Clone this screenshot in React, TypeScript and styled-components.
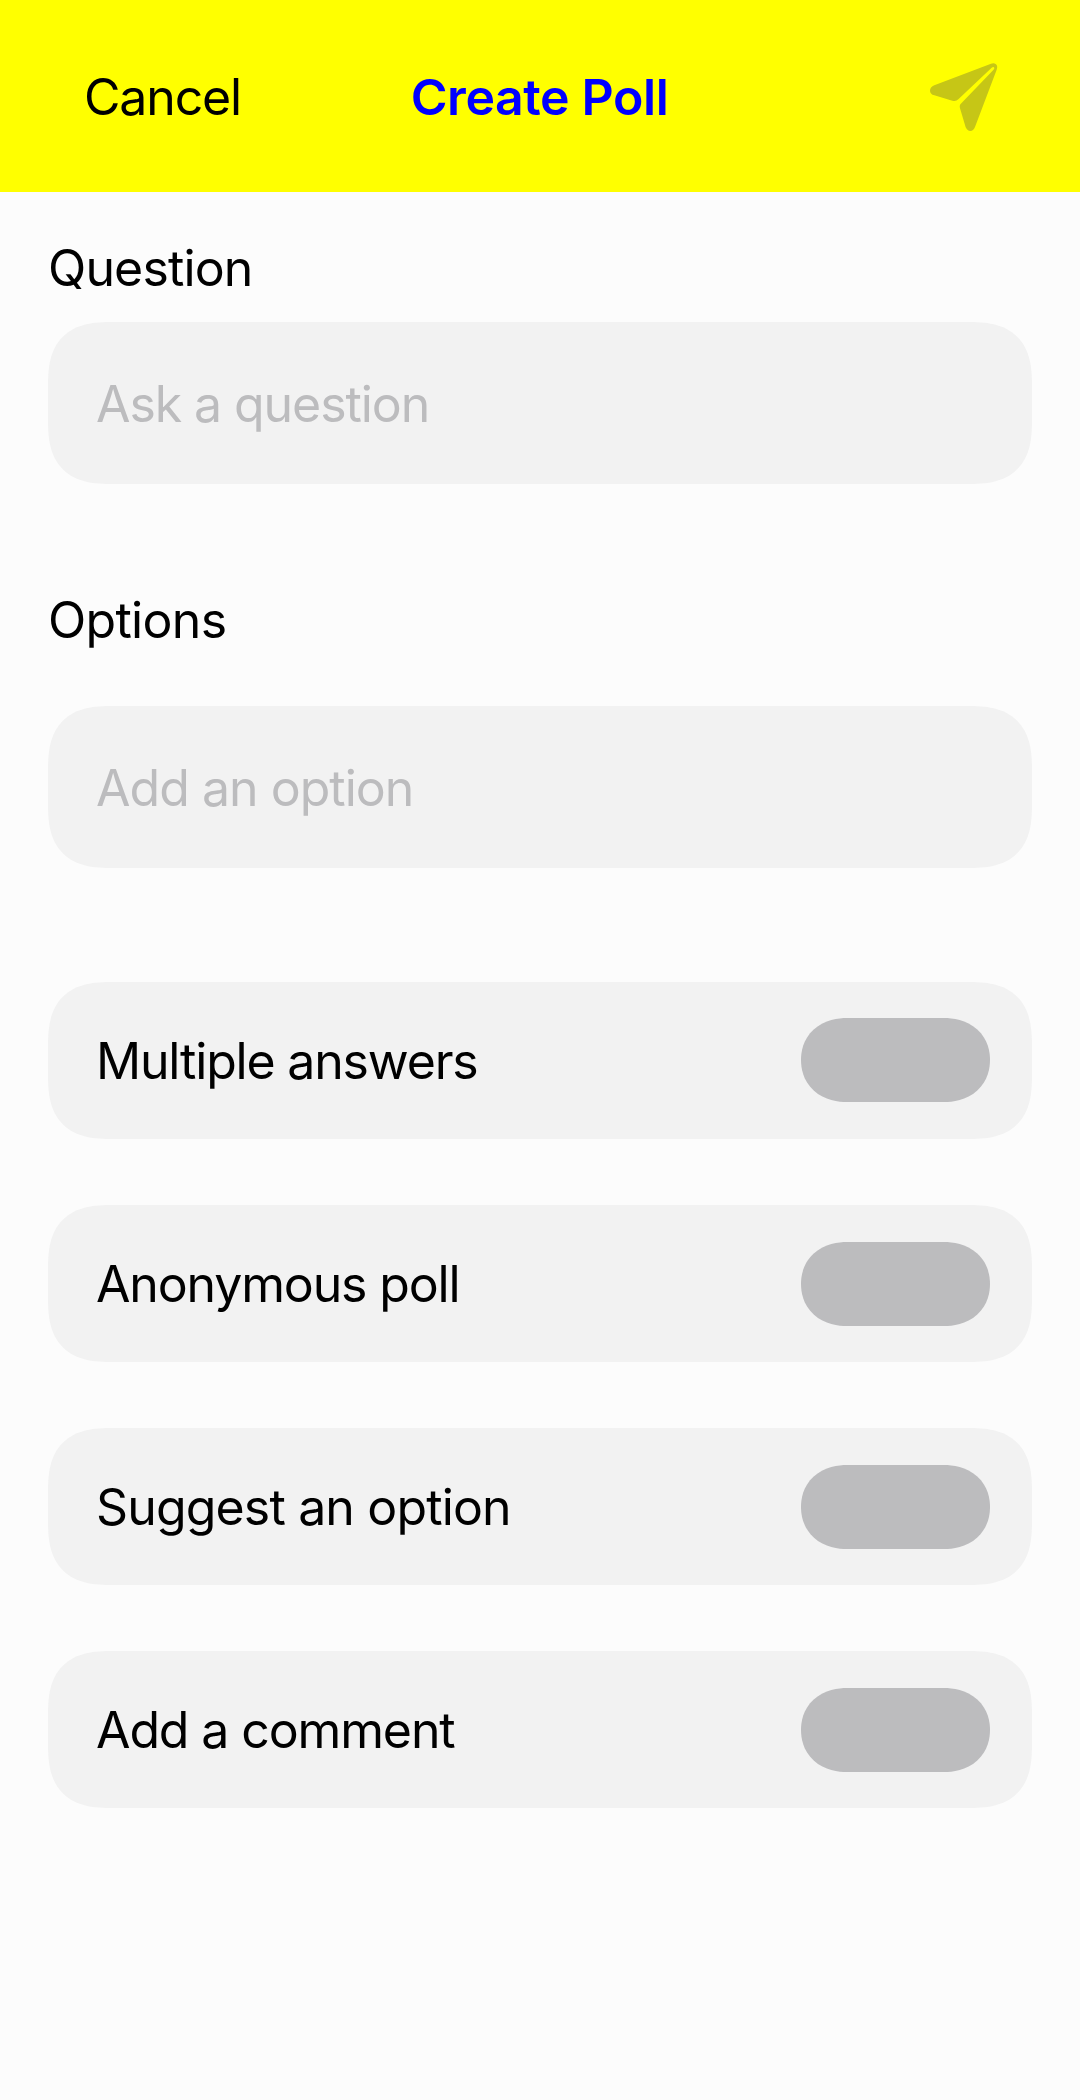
import React, { useState } from "react";
import styled, { createGlobalStyle, css } from "styled-components";

const GlobalStyle = createGlobalStyle`
  body {
    margin: 0;
    background: #fcfcfc;
    color: #000;
    font-family: Inter, "Liberation Sans", sans-serif;
  }
`;

const textBase = css`
  font-size: 50px;
  line-height: 60px;
  font-weight: 400;
  white-space: nowrap;
`;

const smoothCorners = css`
  border-radius: 49px;
  @supports (corner-shape: squircle) {
    border-radius: 64px;
    corner-shape: superellipse(1.4);
  }
`;

const Screen = styled.div`
  box-sizing: border-box;
  min-height: 2100px;
  background: #fcfcfc;
`;

const Header = styled.header`
  box-sizing: border-box;
  display: grid;
  grid-template-columns: 1fr auto 1fr;
  align-items: center;
  height: 192px;
  padding: 0 80px 0 84px;
  background: #ff0;
`;

const PlainButton = styled.button`
  padding: 0;
  border: 0;
  background: none;
  color: inherit;
  font-family: inherit;
`;

const CancelButton = styled(PlainButton)`
  ${textBase}
  justify-self: start;
  padding-top: 2px;
  letter-spacing: -1.15px;
`;

const Title = styled.h1`
  ${textBase}
  margin: 0;
  padding: 1px 5px 0 0;
  color: #00f;
  font-weight: 600;
  letter-spacing: -0.41px;
`;

const SendButton = styled(PlainButton)`
  justify-self: end;
  display: flex;
  margin-right: -30px;
  color: #c6c616;
`;

const Content = styled.main`
  display: flex;
  flex-direction: column;
  padding: 46px 48px 0;
`;

const Section = styled.section<{ $gap: number }>`
  display: flex;
  flex-direction: column;
  gap: ${(p) => p.$gap}px;
`;

const SectionTitle = styled.h2<{ $tracking: number }>`
  ${textBase}
  margin: 0;
  letter-spacing: ${(p) => p.$tracking}px;
`;

const OptionsSection = styled(Section)`
  margin-top: 106px;
`;

const Field = styled.div<{ $tracking: number }>`
  ${textBase}
  ${smoothCorners}
  box-sizing: border-box;
  display: flex;
  align-items: center;
  height: 162px;
  padding: 2px 48px 0;
  background: #f2f2f2;
  color: #bcbcbe;
  letter-spacing: ${(p) => p.$tracking}px;
`;

const SettingList = styled.div`
  display: flex;
  flex-direction: column;
  gap: 66px;
  margin-top: 114px;
`;

const Toggle = styled(PlainButton)`
  width: 189px;
  height: 84px;
  margin-top: 37px;
  border-radius: 42px;
  background: #bcbcbe;
  @supports (corner-shape: squircle) {
    border-radius: 46px / 42px;
    corner-shape: superellipse(1.1);
  }
`;

const SettingRow = styled.div`
  ${smoothCorners}
  box-sizing: border-box;
  display: flex;
  align-items: flex-start;
  justify-content: space-between;
  height: 157px;
  padding: 0 42px 0 48px;
  background: #f2f2f2;

  &:first-child ${Toggle} {
    margin-top: 36px;
  }
`;

const SettingLabel = styled.span<{ $tracking: number }>`
  ${textBase}
  padding-top: 49px;
  letter-spacing: ${(p) => p.$tracking}px;
`;

const settings = [
  { label: "Multiple answers", tracking: -1.18 },
  { label: "Anonymous poll", tracking: -1.15 },
  { label: "Suggest an option", tracking: -0.85 },
  { label: "Add a comment", tracking: -1.12 },
];

function PaperPlane() {
  return (
    <svg width="130" height="110" viewBox="0 0 390 330" fill="currentColor" aria-hidden="true">
      <path d="M273 68 L103 133 Q90 139 90 149 Q90 159 103 163 L157 179 Q168 182 175 175 L275 80 Q280 76 282 79 Q285 82 280 87 L184 187 Q177 193 180 202 L197 259 Q202 270 211 270 Q220 270 225 258 L290 86 Q294 76 288 70 Q282 65 273 68 Z" />
    </svg>
  );
}

export default function App() {
  const [enabled, setEnabled] = useState<Record<string, boolean>>({});
  const flip = (label: string) => setEnabled((prev) => ({ ...prev, [label]: !prev[label] }));

  return (
    <Screen>
      <GlobalStyle />
      <Header>
        <CancelButton>Cancel</CancelButton>
        <Title>Create Poll</Title>
        <SendButton aria-label="Send">
          <PaperPlane />
        </SendButton>
      </Header>
      <Content>
        <Section $gap={24}>
          <SectionTitle $tracking={-0.85}>Question</SectionTitle>
          <Field $tracking={-1.08}>Ask a question</Field>
        </Section>
        <OptionsSection $gap={56}>
          <SectionTitle $tracking={-0.7}>Options</SectionTitle>
          <Field $tracking={-0.97}>Add an option</Field>
        </OptionsSection>
        <SettingList>
          {settings.map(({ label, tracking }) => (
            <SettingRow key={label}>
              <SettingLabel $tracking={tracking}>{label}</SettingLabel>
              <Toggle
                role="switch"
                aria-label={label}
                aria-checked={!!enabled[label]}
                onClick={() => flip(label)}
              />
            </SettingRow>
          ))}
        </SettingList>
      </Content>
    </Screen>
  );
}
